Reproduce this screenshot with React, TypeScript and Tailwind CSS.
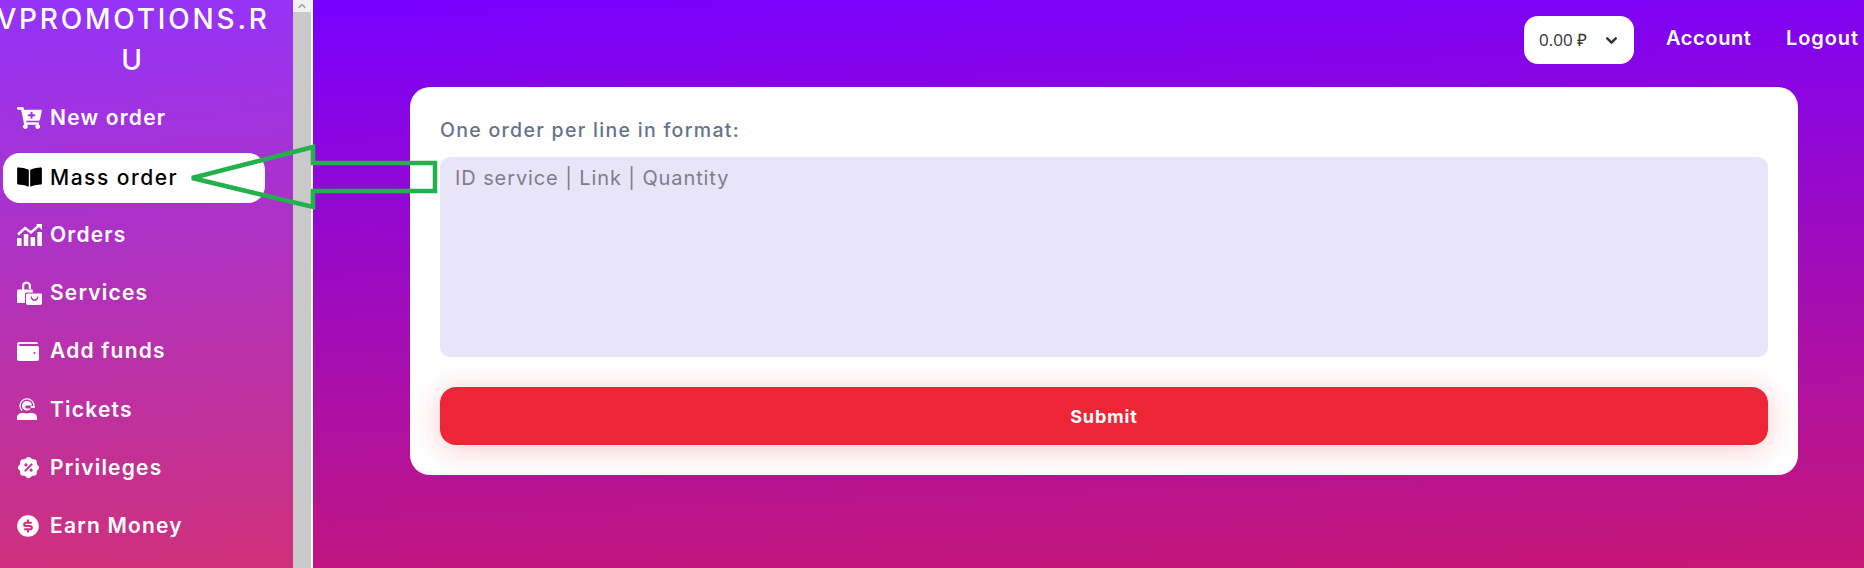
import React from "react";
import { FaCartPlus, FaBookOpen } from "react-icons/fa";
import { TbRosetteDiscountFilled } from "react-icons/tb";
import { RiMoneyDollarCircleFill } from "react-icons/ri";
import { ChevronDown, ChevronUp } from "lucide-react";

const OrdersIcon = () => (
  <svg viewBox="0 0 25 22" className="w-[25px] h-[22px]" fill="currentColor">
    <path d="M1 10.5 L8 4 L14 8.5 L22 1.5" fill="none" stroke="currentColor" strokeWidth="2.4" />
    <path d="M19 0h6v6z" />
    <rect x="0" y="14" width="4.5" height="8" />
    <rect x="6.8" y="10" width="4.5" height="12" />
    <rect x="13.6" y="13" width="4.5" height="9" />
    <rect x="20.4" y="8" width="4.5" height="14" />
  </svg>
);

const ServicesIcon = () => (
  <svg viewBox="0 0 25 24" className="w-[25px] h-[24px]" fill="currentColor">
    <path d="M5 9V5a4.5 4.5 0 0 1 9 0v3h-2.2V5a2.3 2.3 0 0 0-4.6 0v4z" />
    <path d="M1.5 8.5h14l.5 3H9.5A1.5 1.5 0 0 0 8 13v9H1.5A1.5 1.5 0 0 1 0 20.5V10a1.5 1.5 0 0 1 1.5-1.5z" />
    <path fillRule="evenodd" d="M10.5 12.5h13.5a1 1 0 0 1 1 1V22a2 2 0 0 1-2 2H11a2 2 0 0 1-2-2v-8a1.5 1.5 0 0 1 1.5-1.5zM13.6 15.5h1.4c.1 4 4.9 4 5 0h1.4c-.2 6-7.600 6-7.800 0z" />
  </svg>
);

const WalletIcon = () => (
  <svg viewBox="0 0 22 19" className="w-[22px] h-[19px]" fill="currentColor">
    <path d="M2.500 0H19a2 2 0 0 1 2 2H3a1 1 0 0 0 0 2h17.500A1.500 1.500 0 0 1 22 5.500V17a2 2 0 0 1-2 2H2a2 2 0 0 1-2-2V2.500A2.500 2.500 0 0 1 2.500 0z" fillRule="evenodd" />
    <circle cx="17.500" cy="11" r="1.100" fill="#b032b2" />
  </svg>
);

const TicketsIcon = () => (
  <svg viewBox="0 0 20 22" className="w-[20px] h-[22px]" fill="currentColor">
    <path d="M10 0.800a7 7 0 0 1 7 7v1.500" fill="none" stroke="currentColor" strokeWidth="1.300" />
    <path d="M10 0.800a7 7 0 0 0-7 7c0 2 .8 3.500 2 4.700" fill="none" stroke="currentColor" strokeWidth="1.300" />
    <path d="M10 3a5 5 0 0 1 5 4.500H9.500a1.500 1.500 0 0 0-1.300 1.500c0 .8.6 1.500 1.500 1.500H14a5 5 0 0 1-9-3A5 5 0 0 1 10 3z" />
    <rect x="13.500" y="8" width="4.500" height="2" rx="1" />
    <path d="M0 22v-2.500C0 16.500 3 15 6 14.800c2.500 1 5.500 1 8 0 3 .2 6 1.700 6 4.700V22z" />
  </svg>
);

const items: { label: string; icon: React.ReactNode; active?: boolean }[] = [
  { label: "New order", icon: <FaCartPlus className="w-[25px] h-[22px]" /> },
  { label: "Mass order", icon: <FaBookOpen className="w-[25px] h-[22px]" />, active: true },
  { label: "Orders", icon: <OrdersIcon /> },
  { label: "Services", icon: <ServicesIcon /> },
  { label: "Add funds", icon: <WalletIcon /> },
  { label: "Tickets", icon: <TicketsIcon /> },
  { label: "Privileges", icon: <TbRosetteDiscountFilled className="w-[25px] h-[25px] -ml-[1px]" /> },
  { label: "Earn Money", icon: <RiMoneyDollarCircleFill className="w-[26px] h-[26px] -ml-[2px]" /> },
];

export default function App() {
  return (
    <div className="relative flex h-[568px] w-[1864px] overflow-hidden font-['Inter','Noto_Sans',sans-serif]">
      <aside className="w-[293px] shrink-0 bg-[linear-gradient(176deg,#9433fb_0%,#d03079_100%)] text-white">
        <div className="-mt-[1px] w-[266px] text-[28px] leading-[41px] font-medium tracking-[2.8px]">
          <div className="flex justify-center whitespace-nowrap">VPROMOTIONS.R</div>
          <div className="flex justify-center">U</div>
        </div>
        <nav className="mt-[12px] flex flex-col gap-[8.3px]">
          {items.map((it) => (
            <a
              key={it.label}
              className={
                "ml-[3px] flex h-[50px] w-[262px] items-center gap-[8px] rounded-[17px] pl-[14px] text-[21px] font-semibold tracking-[1.2px] " +
                (it.active ? "mt-[2px] -mb-[2px] pb-[2px] bg-white text-black !font-medium !tracking-[1.5px]" : "text-white")
              }
            >
              <span className="flex w-[25px] shrink-0 items-center">{it.icon}</span>
              <span>{it.label}</span>
            </a>
          ))}
        </nav>
      </aside>

      <div className="flex w-[18px] shrink-0 flex-col bg-[#c9c9c9]">
        <div className="flex h-[12px] items-start justify-center bg-[#f1f1f1] text-[#a3a3a3]">
          <ChevronUp className="h-[12px] w-[12px]" strokeWidth={3} />
        </div>
      </div>
      <div className="w-[2px] shrink-0 bg-white" />

      <main className="flex-1 bg-[linear-gradient(178deg,#7800ff_0%,#c81876_100%)]">
        <header className="flex h-[87px] items-start justify-end pr-[4px] pt-[16px]">
          <div className="flex h-[48px] w-[110px] items-center justify-between rounded-[14px] bg-white pl-[15px] pr-[14px] font-['Open_Sans',sans-serif] text-[17px] text-[#333]">
            <span>0.00 ₽</span>
            <ChevronDown className="h-[17px] w-[17px]" strokeWidth={3.5} />
          </div>
          <a className="mt-[7px] ml-[32px] w-[120px] text-[20px] font-semibold tracking-[0.6px] text-white">Account</a>
          <a className="mt-[7px] w-[74px] text-[20px] font-semibold tracking-[0.9px] text-white">Logout</a>
        </header>
        <section className="ml-[97px] flex h-[388px] w-[1388px] flex-col rounded-[20px] bg-white px-[30px]">
          <label className="mt-[30px] h-[40px] text-[19.500px] leading-[26px] font-medium tracking-[1.3px] text-[#64748b]">
            One order per line in format:
          </label>
          <textarea
            readOnly
            placeholder="ID service | Link | Quantity"
            className="h-[200px] w-full resize-none rounded-[10px] bg-[#e8e5f8] px-[15px] py-[6px] text-[20px] tracking-[0.9px] outline-none placeholder:text-[#7d7d8c]"
          />
          <button className="mt-[30px] h-[58px] w-full rounded-[16px] bg-[#ee2536] text-[18px] font-bold tracking-[0.9px] text-white shadow-[0_4px_30px_rgba(238,37,54,0.25)]">
            Submit
          </button>
        </section>
      </main>

      <svg className="pointer-events-none absolute left-0 top-0" width="1864" height="568" fill="none">
        <path
          d="M192 178 L313 147 L313 163 L435 163 L435 191 L313 191 L313 207 Z"
          stroke="#22b14c"
          strokeWidth="4.500"
        />
      </svg>
    </div>
  );
}
